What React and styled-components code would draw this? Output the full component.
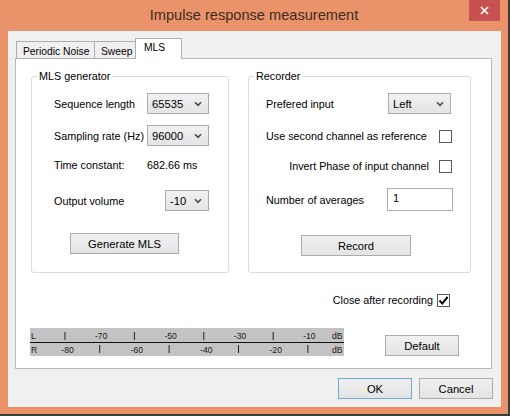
import React from "react";
import styled, { createGlobalStyle } from "styled-components";

const GlobalStyle = createGlobalStyle`
  body {
    margin: 0;
    background: #34403b;
    font-family: "Liberation Sans", Arial, sans-serif;
  }
  * { box-sizing: border-box; }
`;

const Window = styled.div`
  width: 508px;
  height: 414px;
  background: #ea936b;
  display: flex;
  flex-direction: column;
`;

const TitleBar = styled.div`
  height: 31px;
  display: grid;
  grid-template-columns: 1fr auto 1fr;
`;

const Title = styled.div`
  grid-column: 2;
  align-self: center;
  font-size: 14.6px;
  color: #3e2b22;
  padding-bottom: 1px;
`;

const CloseButton = styled.div`
  grid-column: 3;
  justify-self: end;
  width: 31px;
  height: 21px;
  margin-right: 8px;
  background: #c75050;
  display: flex;
  align-items: center;
  justify-content: center;
`;

const Client = styled.div`
  height: 376px;
  margin: 0 7px 0 8px;
  background: #f0f0f0;
  padding: 7px 9px 0 7px;
  display: flex;
  flex-direction: column;
  font-size: 10.8px;
  color: #000;
`;

const TabStrip = styled.div`
  display: flex;
  align-items: flex-end;
  height: 21px;
  padding-left: 1px;
  margin-bottom: -1px;
  position: relative;
  z-index: 1;
`;

const Tab = styled.div`
  width: ${p => p.$w}px;
  height: ${p => (p.$active ? 21 : 18)}px;
  margin-left: ${p => (p.$active ? -2 : 0)}px;
  margin-right: ${p => (p.$active ? 0 : -1)}px;
  padding: ${p => (p.$active ? "2px 0 0 8px" : "3px 0 0 6px")};
  background: ${p => (p.$active ? "#fff" : "#f0f0f0")};
  border: 1px solid #adadad;
  border-bottom: ${p => (p.$active ? "none" : "1px solid #adadad")};
  line-height: 13px;
  font-size: 10.3px;
  white-space: nowrap;
`;

const Panel = styled.div`
  height: 311px;
  background: #fff;
  border: 1px solid #b9b9b9;
  padding: 10px 0 0 15px;
  display: flex;
  flex-direction: column;
`;

const GroupsRow = styled.div`
  display: flex;
  gap: 19px;
`;

const GroupBox = styled.fieldset`
  width: ${p => p.$w}px;
  height: 204px;
  margin: 0;
  padding: 0;
  border: 1px solid #dcdcdc;
  border-radius: 3px;
  min-width: 0;
`;

const Legend = styled.legend`
  margin-left: 5px;
  padding: 0 2px;
  line-height: 14px;
  font-size: 10.8px;
`;

const GroupBody = styled.div`
  padding-left: ${p => p.$pl}px;
  display: flex;
  flex-direction: column;
`;

const Row = styled.div`
  display: grid;
  grid-template-columns: ${p => p.$cols};
  align-items: center;
  height: ${p => p.$h || 21}px;
  margin-top: ${p => p.$mt}px;
`;

const Label = styled.span`
  white-space: nowrap;
  justify-self: ${p => (p.$right ? "end" : "start")};
  padding-right: ${p => (p.$right ? 10 : 0)}px;
`;

const Combo = styled.div`
  width: ${p => p.$w}px;
  height: 21px;
  background: linear-gradient(#f2f2f2, #e3e3e3);
  border: 1px solid #acacac;
  display: flex;
  align-items: center;
  justify-content: space-between;
  padding: 1px 6px 0 4px;
  font-size: 11.2px;
`;

const Chevron = () => (
  <svg width="8" height="6" viewBox="0 0 8 6">
    <path d="M1 1.2 L4 4.4 L7 1.2" fill="none" stroke="#4a4a4a" strokeWidth="1.6" />
  </svg>
);

const CheckBox = styled.div`
  width: 13px;
  height: 13px;
  border: 1px solid #5a5a5a;
  background: #fff;
  display: flex;
  align-items: center;
  justify-content: center;
`;

const NumberField = styled.div`
  width: 66px;
  height: 23px;
  border: 1px solid #abadb3;
  background: #fff;
  padding: 3px 0 0 5px;
  font-size: 11.2px;
`;

const Button = styled.div`
  width: ${p => p.$w}px;
  height: 21px;
  margin-left: ${p => p.$ml || 0}px;
  margin-top: ${p => p.$mt || 0}px;
  background: linear-gradient(#f0f0f0, #e4e4e4);
  border: 1px solid ${p => (p.$default ? "#6ea6de" : "#acacac")};
  display: flex;
  align-items: center;
  justify-content: center;
  font-size: 11.2px;
  padding-top: 1px;
`;

const CloseRow = styled.div`
  display: flex;
  justify-content: flex-end;
  align-items: center;
  gap: 4px;
  height: 20px;
  margin-top: 17px;
  padding-right: 41px;
`;

const MeterRow = styled.div`
  display: flex;
  align-items: flex-start;
  gap: 41px;
  margin-top: 18px;
  margin-left: -1px;
`;

const BottomBar = styled.div`
  display: flex;
  justify-content: flex-end;
  gap: 7px;
  margin-top: 9px;
  margin-right: -1px;
`;

const Check = () => (
  <svg width="11" height="11" viewBox="0 0 11 11">
    <path d="M1.5 5.5 L4.3 8.5 L9.6 1.8" fill="none" stroke="#000" strokeWidth="2" />
  </svg>
);

function Meter() {
  const x = i => 36.5 + i * 34.7;
  const steps = [0, 1, 2, 3, 4, 5, 6, 7];
  const db = i => `-${80 - i * 10}`;
  const text = { fontFamily: "Liberation Sans, Arial, sans-serif", fontSize: 8.6, fill: "#1a1a1a" };
  return (
    <svg width="314" height="28" viewBox="0 0 314 28">
      <rect width="314" height="28" fill="#c3c3c3" />
      <line x1="0" y1="14.5" x2="314" y2="14.5" stroke="#111" strokeWidth="1" />
      <text x="1" y="11" style={text}>L</text>
      <text x="1" y="24.5" style={text}>R</text>
      <text x="302" y="11" style={text}>dB</text>
      <text x="302" y="24.5" style={text}>dB</text>
      {steps.map(i =>
        i % 2 === 0 ? (
          <g key={i}>
            <line x1={x(i) - 1.5} y1="4" x2={x(i) - 1.5} y2="12" stroke="#222" />
            <text x={x(i) + 1} y="24.5" textAnchor="middle" style={text}>{db(i)}</text>
          </g>
        ) : (
          <g key={i}>
            <text x={x(i)} y="11" textAnchor="middle" style={text}>{db(i)}</text>
            <line x1={x(i) - 1.5} y1="17" x2={x(i) - 1.5} y2="25" stroke="#222" />
          </g>
        )
      )}
    </svg>
  );
}

export default function App() {
  return (
    <>
      <GlobalStyle />
      <Window>
        <TitleBar>
          <Title>Impulse response measurement</Title>
          <CloseButton>
            <svg width="9" height="9" viewBox="0 0 9 9">
              <path d="M1 1 L8 8 M8 1 L1 8" stroke="#fff" strokeWidth="1.7" />
            </svg>
          </CloseButton>
        </TitleBar>
        <Client>
          <TabStrip>
            <Tab $w={79}>Periodic Noise</Tab>
            <Tab $w={44}>Sweep</Tab>
            <Tab $w={47} $active>MLS</Tab>
          </TabStrip>
          <Panel>
            <GroupsRow>
              <GroupBox $w={198}>
                <Legend>MLS generator</Legend>
                <GroupBody $pl={22}>
                  <Row $cols="93px 62px" $mt={10}>
                    <Label>Sequence length</Label>
                    <Combo $w={62}>65535<Chevron /></Combo>
                  </Row>
                  <Row $cols="93px 62px" $mt={11}>
                    <Label>Sampling rate (Hz)</Label>
                    <Combo $w={62}>96000<Chevron /></Combo>
                  </Row>
                  <Row $cols="93px auto" $mt={9} $h={20}>
                    <Label>Time constant:</Label>
                    <Label>682.66 ms</Label>
                  </Row>
                  <Row $cols="111px 44px" $mt={15}>
                    <Label>Output volume</Label>
                    <Combo $w={44}>-10<Chevron /></Combo>
                  </Row>
                  <Button $w={109} $ml={16} $mt={22}>Generate MLS</Button>
                </GroupBody>
              </GroupBox>
              <GroupBox $w={223}>
                <Legend>Recorder</Legend>
                <GroupBody $pl={17}>
                  <Row $cols="122px 63px" $mt={10}>
                    <Label>Prefered input</Label>
                    <Combo $w={63}>Left<Chevron /></Combo>
                  </Row>
                  <Row $cols="173px 13px" $mt={12} $h={20}>
                    <Label>Use second channel as reference</Label>
                    <CheckBox />
                  </Row>
                  <Row $cols="173px 13px" $mt={10} $h={20}>
                    <Label $right>Invert Phase of input channel</Label>
                    <CheckBox />
                  </Row>
                  <Row $cols="121px 66px" $mt={12} $h={23}>
                    <Label>Number of averages</Label>
                    <NumberField>1</NumberField>
                  </Row>
                  <Button $w={110} $ml={35} $mt={24}>Record</Button>
                </GroupBody>
              </GroupBox>
            </GroupsRow>
            <CloseRow>
              <span>Close after recording</span>
              <CheckBox><Check /></CheckBox>
            </CloseRow>
            <MeterRow>
              <Meter />
              <Button $w={74} $mt={7}>Default</Button>
            </MeterRow>
          </Panel>
          <BottomBar>
            <Button $w={74} $default>OK</Button>
            <Button $w={74}>Cancel</Button>
          </BottomBar>
        </Client>
      </Window>
    </>
  );
}
